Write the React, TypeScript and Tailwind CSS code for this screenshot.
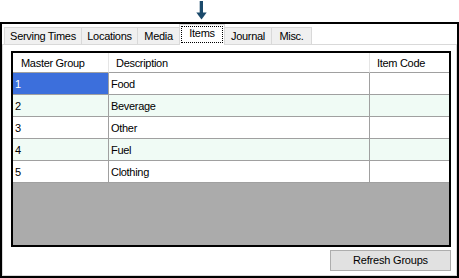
import React from "react";

const font = { fontFamily: '"Liberation Sans", Arial, sans-serif' };

function Tab({ label, w }: { label: string; w: number }) {
  return (
    <div
      className="h-[17px] bg-[#f0f0f0] border-l border-t border-r border-[#d9d9d9] flex items-center justify-center pt-[1px] -ml-px first:ml-0"
      style={{ width: w }}
    >
      <span className="text-[11px] leading-none text-black tracking-[-0.3px]">{label}</span>
    </div>
  );
}

const rows = [
  { id: "1", desc: "Food" },
  { id: "2", desc: "Beverage" },
  { id: "3", desc: "Other" },
  { id: "4", desc: "Fuel" },
  { id: "5", desc: "Clothing" },
];

export default function App() {
  return (
    <div className="w-[459px] h-[278px] bg-white text-black" style={font}>
      {/* annotation arrow */}
      <div className="h-[22px] pl-[196px] pt-[1px]">
        <svg width="11" height="19" viewBox="0 0 11 19">
          <rect x="3.7" y="0" width="3.3" height="12" fill="#1b4a6b" />
          <polygon points="0.3,11.6 10.7,11.6 5.5,18.6" fill="#1b4a6b" />
        </svg>
      </div>
      {/* window frame */}
      <div className="w-[459px] h-[256px] border-2 border-black flex flex-col">
        {/* tab strip */}
        <div className="h-[20px] flex items-end pl-[2px]">
          <Tab label="Serving Times" w={78} />
          <Tab label="Locations" w={57} />
          <Tab label="Media" w={43} />
          <div className="relative z-10 -ml-px w-[46px] h-[21px] -mb-px bg-white border-l border-t border-r border-[#d9d9d9] pt-[1px] px-[1px]">
            <div className="h-[17px] border border-dotted border-black flex items-center justify-center pb-[2px]">
              <span className="text-[11px] leading-none tracking-[-0.3px]">Items</span>
            </div>
          </div>
          <Tab label="Journal" w={48} />
          <Tab label="Misc." w={41} />
        </div>
        {/* tab page */}
        <div className="flex-1 border border-[#d9d9d9] bg-white flex flex-col items-start pl-[8px] pt-[6px]">
          <div className="w-[440px] h-[196px] border-2 border-black bg-[#ababab] flex flex-col">
            <div className="grid grid-cols-[96px_261px_1fr] bg-white">
              {/* header */}
              <div className="h-[20px] border-r border-b border-r-[#e5e5e5] border-b-[#a0a0a0] flex items-center pl-[8px] pt-[2px] text-[11px] leading-none tracking-[-0.3px]">
                Master Group
              </div>
              <div className="h-[20px] border-r border-b border-r-[#e5e5e5] border-b-[#a0a0a0] flex items-center pl-[7px] pt-[2px] text-[11px] leading-none tracking-[-0.3px]">
                Description
              </div>
              <div className="h-[20px] border-b border-b-[#a0a0a0] flex items-center pl-[7px] pt-[2px] text-[11px] leading-none tracking-[-0.3px]">
                Item Code
              </div>
              {rows.map((r, i) => {
                const alt = i % 2 === 1 ? "bg-[#f0fbf5]" : "bg-white";
                const sel = i === 0;
                return (
                  <React.Fragment key={r.id}>
                    <div
                      className={`h-[22px] border-r border-b border-[#a0a0a0] flex items-center pl-[2px] pt-[2px] text-[11px] leading-none tracking-[-0.3px] ${
                        sel ? "bg-[#3c6fdc] text-white" : alt
                      }`}
                    >
                      {r.id}
                    </div>
                    <div
                      className={`h-[22px] border-r border-b border-[#a0a0a0] flex items-center pl-[2px] pt-[2px] text-[11px] leading-none tracking-[-0.3px] ${alt}`}
                    >
                      {r.desc}
                    </div>
                    <div className={`h-[22px] border-b border-[#a0a0a0] ${alt}`} />
                  </React.Fragment>
                );
              })}
            </div>
          </div>
          <div className="w-[440px] flex justify-end mt-[3px]">
            <button className="w-[121px] h-[21px] bg-[#e1e1e1] border border-[#adadad] flex items-center justify-center text-[11px] tracking-[-0.2px] text-black">
              Refresh Groups
            </button>
          </div>
        </div>
      </div>
    </div>
  );
}
